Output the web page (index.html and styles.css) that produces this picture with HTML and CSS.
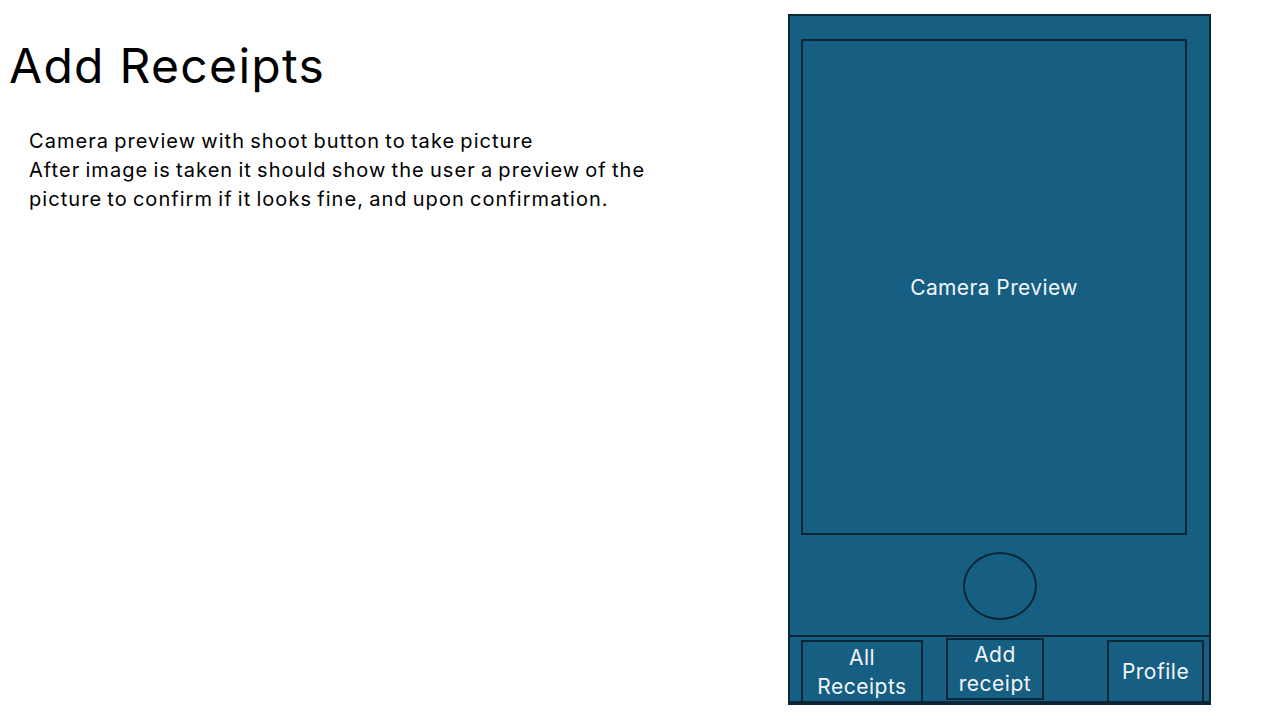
FILE: index.html
```html
<!DOCTYPE html>
<html>
<head>
<meta charset="utf-8">
<link rel="stylesheet" href="styles.css">
</head>
<body>
<div class="page">
  <div class="notes">
    <h1 class="title">Add Receipts</h1>
    <p class="desc">Camera preview with shoot button to take picture<br>After image is taken it should show the user a preview of the<br>picture to confirm if it looks fine, and upon confirmation.</p>
  </div>
  <div class="phone">
    <div class="preview">Camera Preview</div>
    <div class="shoot-row"><div class="shoot"></div></div>
    <div class="nav">
      <div class="tab tab-all">All<br>Receipts</div>
      <div class="tab tab-add">Add<br>receipt</div>
      <div class="tab tab-profile">Profile</div>
    </div>
  </div>
</div>
</body>
</html>
```
FILE: styles.css
```css
html, body {
  margin: 0;
  padding: 0;
  background: #ffffff;
}
.page {
  width: 1280px;
  height: 720px;
  display: flex;
  font-family: Inter, "Open Sans", sans-serif;
}
.notes {
  width: 788px;
  flex: none;
}
.title {
  margin: 34px 0 0 9px;
  font-size: 48px;
  font-weight: 400;
  line-height: 64px;
  color: #000;
  letter-spacing: 1.3px;
}
.desc {
  margin: 29px 0 0 29px;
  width: 700px;
  font-size: 20px;
  line-height: 29px;
  color: #000;
  letter-spacing: 1.05px;
  word-spacing: -1.5px;
}
.phone {
  margin-top: 14px;
  width: 423px;
  height: 691px;
  box-sizing: border-box;
  border: 2px solid #0b2637;
  border-bottom-width: 4px;
  background: #175f82;
  display: flex;
  flex-direction: column;
}
.preview {
  margin: 23px 0 0 11px;
  width: 386px;
  height: 496px;
  box-sizing: border-box;
  border: 2px solid #0b2637;
  display: flex;
  align-items: center;
  justify-content: center;
  color: #f2f5f8;
  font-size: 21px;
  letter-spacing: 0.4px;
}
.shoot-row {
  height: 100px;
  display: flex;
  justify-content: center;
  align-items: center;
}
.shoot {
  width: 74px;
  height: 68px;
  box-sizing: border-box;
  border: 2px solid #0b2637;
  border-radius: 50%;
  margin-top: 2px;
}
.nav {
  flex: 1;
  border-top: 2px solid #0b2637;
  display: flex;
  align-items: flex-end;
  padding-left: 11px;
}
.tab {
  box-sizing: border-box;
  border: 2px solid #0b2637;
  color: #f2f5f8;
  font-size: 21px;
  line-height: 29px;
  letter-spacing: 0.5px;
  text-align: center;
  display: flex;
  align-items: center;
  justify-content: center;
}
.tab-all {
  width: 122px;
  height: 63px;
  margin-bottom: -2px;
}
.tab-add {
  width: 98px;
  height: 62px;
  margin-left: 23px;
  margin-bottom: 1px;
}
.tab-profile {
  width: 97px;
  height: 63px;
  margin-left: 63px;
  margin-bottom: -2px;
}
```
